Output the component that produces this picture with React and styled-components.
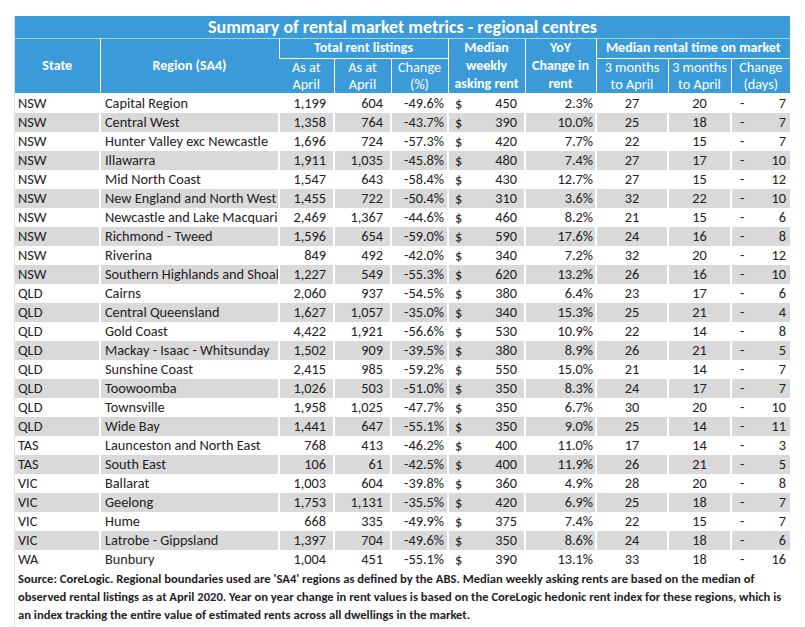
import React from 'react';
import styled, { createGlobalStyle } from 'styled-components';

const GlobalStyle = createGlobalStyle`
  body {
    margin: 0;
    background: #ffffff;
    font-family: Carlito, Lato, "Liberation Sans", sans-serif;
    color: #222;
  }
`;

const Page = styled.div`
  padding: 16px 0 0 14px;
  width: 776px;
`;

const Sheet = styled.div`
  border-left: 1px solid #e2e2e2;
  padding-bottom: 6px;
`;

const Table = styled.table`
  border-collapse: collapse;
  table-layout: fixed;
  width: 775px;
  font-size: 14.3px;
`;

const TitleCell = styled.th`
  background: #3b9bd9;
  color: #fff;
  font-size: 18px;
  font-weight: 700;
  height: 22px;
  padding: 0;
  line-height: 22px;
  text-align: center;
  border-bottom: 1px solid rgba(255, 255, 255, 0.55);
`;

const HeadCell = styled.th`
  background: #3b9bd9;
  color: #fff;
  font-size: ${(p) => (p.$bold ? '14px' : '14.3px')};
  font-weight: ${(p) => (p.$bold ? 700 : 400)};
  padding: 0 2px;
  height: ${(p) => p.$h}px;
  line-height: ${(p) => (p.$tight ? '16.5px' : '18px')};
  text-align: center;
  vertical-align: middle;
  border-left: 1px solid rgba(255, 255, 255, 0.55);
  border-bottom: 1px solid rgba(255, 255, 255, 0.55);
  white-space: nowrap;
  overflow: hidden;

  &:first-child {
    border-left: none;
  }
`;

const Row = styled.tr`
  height: 19px;
  background: ${(p) => (p.$striped ? '#d9d9d9' : '#ffffff')};
`;

const Cell = styled.td`
  padding: 0 ${(p) => p.$pr ?? 3}px 0 ${(p) => p.$pl ?? 3}px;
  height: 19px;
  line-height: 19px;
  text-align: ${(p) => p.$align || 'left'};
  white-space: nowrap;
  overflow: hidden;
  border-left: 2px solid #fff;

  &:first-child {
    border-left: none;
  }
`;

const Split = styled.div`
  display: flex;
  justify-content: space-between;
`;

const Note = styled.p`
  margin: 1px 0 0;
  padding-left: 3px;
  font-size: 12.6px;
  font-weight: 700;
  line-height: 18px;
  color: #1e1e1e;
  white-space: nowrap;
`;

const widths = [85, 179, 55, 57, 57, 77, 71, 72, 63, 59];

const rows = [
  ['NSW', 'Capital Region', '1,199', '604', '-49.6%', '450', '2.3%', '27', '20', '7'],
  ['NSW', 'Central West', '1,358', '764', '-43.7%', '390', '10.0%', '25', '18', '7'],
  ['NSW', 'Hunter Valley exc Newcastle', '1,696', '724', '-57.3%', '420', '7.7%', '22', '15', '7'],
  ['NSW', 'Illawarra', '1,911', '1,035', '-45.8%', '480', '7.4%', '27', '17', '10'],
  ['NSW', 'Mid North Coast', '1,547', '643', '-58.4%', '430', '12.7%', '27', '15', '12'],
  ['NSW', 'New England and North West', '1,455', '722', '-50.4%', '310', '3.6%', '32', '22', '10'],
  ['NSW', 'Newcastle and Lake Macquarie', '2,469', '1,367', '-44.6%', '460', '8.2%', '21', '15', '6'],
  ['NSW', 'Richmond - Tweed', '1,596', '654', '-59.0%', '590', '17.6%', '24', '16', '8'],
  ['NSW', 'Riverina', '849', '492', '-42.0%', '340', '7.2%', '32', '20', '12'],
  ['NSW', 'Southern Highlands and Shoalhaven', '1,227', '549', '-55.3%', '620', '13.2%', '26', '16', '10'],
  ['QLD', 'Cairns', '2,060', '937', '-54.5%', '380', '6.4%', '23', '17', '6'],
  ['QLD', 'Central Queensland', '1,627', '1,057', '-35.0%', '340', '15.3%', '25', '21', '4'],
  ['QLD', 'Gold Coast', '4,422', '1,921', '-56.6%', '530', '10.9%', '22', '14', '8'],
  ['QLD', 'Mackay - Isaac - Whitsunday', '1,502', '909', '-39.5%', '380', '8.9%', '26', '21', '5'],
  ['QLD', 'Sunshine Coast', '2,415', '985', '-59.2%', '550', '15.0%', '21', '14', '7'],
  ['QLD', 'Toowoomba', '1,026', '503', '-51.0%', '350', '8.3%', '24', '17', '7'],
  ['QLD', 'Townsville', '1,958', '1,025', '-47.7%', '350', '6.7%', '30', '20', '10'],
  ['QLD', 'Wide Bay', '1,441', '647', '-55.1%', '350', '9.0%', '25', '14', '11'],
  ['TAS', 'Launceston and North East', '768', '413', '-46.2%', '400', '11.0%', '17', '14', '3'],
  ['TAS', 'South East', '106', '61', '-42.5%', '400', '11.9%', '26', '21', '5'],
  ['VIC', 'Ballarat', '1,003', '604', '-39.8%', '360', '4.9%', '28', '20', '8'],
  ['VIC', 'Geelong', '1,753', '1,131', '-35.5%', '420', '6.9%', '25', '18', '7'],
  ['VIC', 'Hume', '668', '335', '-49.9%', '375', '7.4%', '22', '15', '7'],
  ['VIC', 'Latrobe - Gippsland', '1,397', '704', '-49.6%', '350', '8.6%', '24', '18', '6'],
  ['WA', 'Bunbury', '1,004', '451', '-55.1%', '390', '13.1%', '33', '18', '16'],
];

const DataRow = ({ row, striped }) => {
  const [state, region, april1, april2, change, rent, yoy, t1, t2, days] = row;
  return (
    <Row $striped={striped}>
      <Cell $pl={3}>{state}</Cell>
      <Cell $pl={4} $pr={0}>{region}</Cell>
      <Cell $align="right" $pr={7}>{april1}</Cell>
      <Cell $align="right" $pr={7}>{april2}</Cell>
      <Cell $align="right" $pr={3}>{change}</Cell>
      <Cell $pl={6} $pr={7}>
        <Split>
          <span>$</span>
          <span>{rent}</span>
        </Split>
      </Cell>
      <Cell $align="right" $pr={2}>{yoy}</Cell>
      <Cell $align="center">{t1}</Cell>
      <Cell $align="center">{t2}</Cell>
      <Cell $pl={8} $pr={4}>
        <Split>
          <span>-</span>
          <span>{days}</span>
        </Split>
      </Cell>
    </Row>
  );
};

export default function App() {
  return (
    <>
      <GlobalStyle />
      <Page>
        <Sheet>
          <Table>
            <colgroup>
              {widths.map((w, i) => (
                <col key={i} style={{ width: w }} />
              ))}
            </colgroup>
            <thead>
              <tr>
                <TitleCell colSpan={10}>Summary of rental market metrics - regional centres</TitleCell>
              </tr>
              <tr>
                <HeadCell $bold rowSpan={2}>State</HeadCell>
                <HeadCell $bold rowSpan={2}>Region (SA4)</HeadCell>
                <HeadCell $bold $h={18} colSpan={3}>Total rent listings</HeadCell>
                <HeadCell $bold rowSpan={2}>Median<br />weekly<br />asking rent</HeadCell>
                <HeadCell $bold rowSpan={2}>YoY<br />Change in<br />rent</HeadCell>
                <HeadCell $bold $h={18} colSpan={3}>Median rental time on market</HeadCell>
              </tr>
              <tr>
                <HeadCell $tight $h={33}>As at<br />April</HeadCell>
                <HeadCell $tight $h={33}>As at<br />April</HeadCell>
                <HeadCell $tight $h={33}>Change<br />(%)</HeadCell>
                <HeadCell $tight $h={33}>3 months<br />to April</HeadCell>
                <HeadCell $tight $h={33}>3 months<br />to April</HeadCell>
                <HeadCell $tight $h={33}>Change<br />(days)</HeadCell>
              </tr>
            </thead>
            <tbody>
              {rows.map((row, i) => (
                <DataRow key={row[1]} row={row} striped={i % 2 === 1} />
              ))}
            </tbody>
          </Table>
          <Note>
            Source: CoreLogic. Regional boundaries used are 'SA4' regions as defined by the ABS. Median weekly asking rents are based on the median of
            <br />
            observed rental listings as at April 2020. Year on year change in rent values is based on the CoreLogic hedonic rent index for these regions, which is
            <br />
            an index tracking the entire value of estimated rents across all dwellings in the market.
          </Note>
        </Sheet>
      </Page>
    </>
  );
}
